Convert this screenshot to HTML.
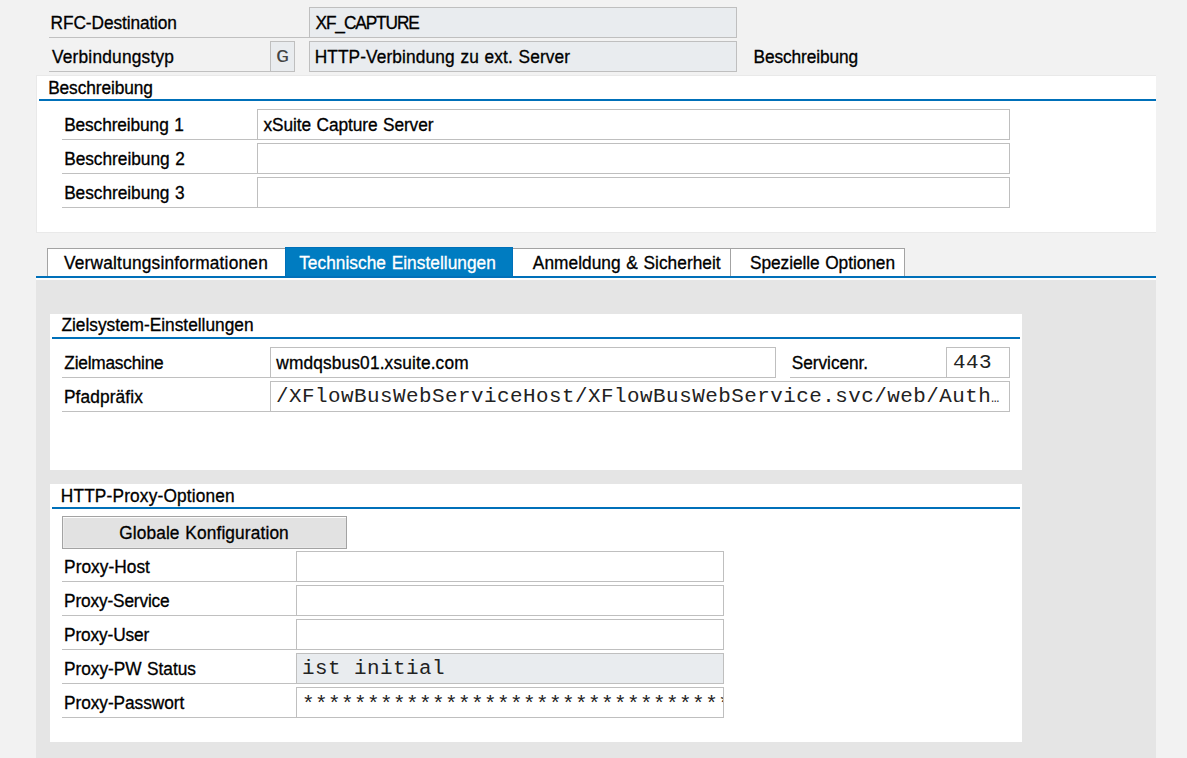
<!DOCTYPE html>
<html lang="de">
<head>
<meta charset="utf-8">
<title>RFC-Destination XF_CAPTURE</title>
<style>
html,body{margin:0;padding:0;}
body{width:1187px;height:758px;overflow:hidden;background:#f2f2f2;position:relative;
  font-family:"Liberation Sans",sans-serif;font-size:17.3px;color:#000;}
.a{position:absolute;}
.t{position:absolute;white-space:nowrap;word-spacing:0.8px;line-height:20px;height:20px;transform:scaleY(1.06);transform-origin:0 16px;-webkit-text-stroke:0.3px currentColor;}
.u{position:absolute;height:1px;background:#c0c0c0;}
.f{position:absolute;box-sizing:border-box;height:31px;border:1px solid #bfbfbf;background:#fff;overflow:hidden;white-space:nowrap;}
.f.d{background:#e9ecef;}
.m{position:absolute;left:5px;top:5px;line-height:20px;font-family:"Liberation Mono",monospace;font-size:19px;letter-spacing:0.42px;color:#222;transform:scale(1.1,1.05);transform-origin:0 16px;}
.m.g{color:#444;}
.el{letter-spacing:0;font-size:12px;}
.bl{position:absolute;height:2px;background:#0070b9;}
.box{position:absolute;background:#fff;}
.btn{box-sizing:border-box;border:1px solid #a3a3a3;background:#e2e2e2;box-shadow:inset 0 1px 0 #fdfdfd,inset 1px 0 0 #ebebeb,inset 0 -1px 0 #e8e8e8;}
#mstar{top:7px;}
#mG{left:5px;transform:scale(1.15,1.0);}
</style>
</head>
<body>
<div class="t" id="t1" style="left:50.62px;top:13.00px;letter-spacing:-0.097px;">RFC-Destination</div>
<div class="u" style="left:49px;top:37px;width:260px;"></div>
<div class="f d" style="left:309px;top:7px;width:428px;"></div>
<div class="t" id="t3" style="left:315.49px;top:13.00px;letter-spacing:-1.100px;">XF_CAPTURE</div>
<div class="t" id="t2" style="left:51.88px;top:47.00px;letter-spacing:0.228px;">Verbindungstyp</div>
<div class="u" style="left:49px;top:71px;width:221px;"></div>
<div class="f d" style="left:270px;top:41px;width:25px;"><span class="m g" id="mG">G</span></div>
<div class="f d" style="left:309px;top:41px;width:428px;"></div>
<div class="t" id="t4" style="left:314.64px;top:47.00px;letter-spacing:0.115px;">HTTP-Verbindung zu ext. Server</div>
<div class="t" id="t5" style="left:753.62px;top:47.00px;letter-spacing:-0.116px;">Beschreibung</div>
<div class="a" style="left:36px;top:75px;width:1120px;height:158px;background:#e9e9e9;"></div>
<div class="box" style="left:37px;top:76px;width:1119px;height:156px;"></div>
<div class="t" id="t6" style="left:48.17px;top:78.00px;letter-spacing:-0.091px;">Beschreibung</div>
<div class="bl" style="left:39px;top:99px;width:1117px;"></div>
<div class="t" id="t7" style="left:64.13px;top:115.00px;letter-spacing:-0.097px;">Beschreibung 1</div>
<div class="u" style="left:62px;top:139px;width:195px;"></div>
<div class="f" style="left:257px;top:109px;width:753px;"></div>
<div class="t" id="t8" style="left:64.13px;top:149.00px;letter-spacing:-0.018px;">Beschreibung 2</div>
<div class="u" style="left:62px;top:173px;width:195px;"></div>
<div class="f" style="left:257px;top:143px;width:753px;"></div>
<div class="t" id="t9" style="left:64.13px;top:183.00px;letter-spacing:-0.030px;">Beschreibung 3</div>
<div class="u" style="left:62px;top:207px;width:195px;"></div>
<div class="f" style="left:257px;top:177px;width:753px;"></div>
<div class="t" id="t10" style="left:263.57px;top:115.00px;letter-spacing:-0.087px;">xSuite Capture Server</div>
<div class="a" style="left:36px;top:278px;width:1120px;height:2px;background:#fdfdfd;"></div>
<div class="a" style="left:36px;top:280px;width:1120px;height:478px;background:#e5e5e5;"></div>
<div class="a" style="left:47px;top:248px;width:858px;height:28px;background:#fff;box-sizing:border-box;border:1px solid #a3a3a3;border-bottom:none;"></div>
<div class="a" style="left:730px;top:248px;width:1px;height:28px;background:#a3a3a3;"></div>
<div class="bl" style="left:36px;top:276px;width:1120px;"></div>
<div class="a" style="left:285px;top:247px;width:228px;height:29px;background:#007cc1;box-sizing:border-box;border:1px solid #0070b9;border-bottom:none;"></div>
<div class="t" id="t11" style="left:63.97px;top:253.00px;letter-spacing:0.214px;">Verwaltungsinformationen</div>
<div class="t" id="t12" style="left:299.17px;top:253.00px;letter-spacing:0.038px;color:#fff;">Technische Einstellungen</div>
<div class="t" id="t13" style="left:532.83px;top:253.00px;letter-spacing:0.040px;">Anmeldung &amp; Sicherheit</div>
<div class="t" id="t14" style="left:750.00px;top:253.00px;letter-spacing:-0.051px;">Spezielle Optionen</div>
<div class="box" style="left:50px;top:314px;width:972px;height:156px;"></div>
<div class="t" id="t15" style="left:61.42px;top:315.00px;letter-spacing:0.001px;">Zielsystem-Einstellungen</div>
<div class="bl" style="left:52px;top:337px;width:968px;"></div>
<div class="t" id="t16" style="left:64.37px;top:353.00px;letter-spacing:-0.224px;">Zielmaschine</div>
<div class="u" style="left:62px;top:377px;width:208px;"></div>
<div class="f" style="left:270px;top:347px;width:506px;"></div>
<div class="t" id="t17" style="left:276.32px;top:353.00px;letter-spacing:0.151px;">wmdqsbus01.xsuite.com</div>
<div class="t" id="t18" style="left:791.87px;top:353.00px;letter-spacing:-0.068px;">Servicenr.</div>
<div class="u" style="left:790px;top:377px;width:156px;"></div>
<div class="f" style="left:946px;top:347px;width:64px;"><span class="m" id="m443" style="left:6px;">443</span></div>
<div class="t" id="t19" style="left:63.95px;top:387.00px;letter-spacing:0.117px;">Pfadpräfix</div>
<div class="u" style="left:62px;top:411px;width:208px;"></div>
<div class="f" style="left:270px;top:381px;width:740px;"><span class="m" id="mpath">/XFlowBusWebServiceHost/XFlowBusWebService.svc/web/Auth<span class="el">…</span></span></div>
<div class="box" style="left:50px;top:484px;width:972px;height:258px;"></div>
<div class="t" id="t20" style="left:60.79px;top:486.00px;letter-spacing:0.166px;">HTTP-Proxy-Optionen</div>
<div class="bl" style="left:52px;top:507px;width:968px;"></div>
<div class="a btn" style="left:62px;top:516px;width:285px;height:33px;"></div>
<div class="t" id="t21" style="left:119.15px;top:523.00px;letter-spacing:0.129px;">Globale Konfiguration</div>
<div class="t" id="t22" style="left:64.11px;top:557.00px;letter-spacing:0.035px;">Proxy-Host</div>
<div class="u" style="left:62px;top:581px;width:234px;"></div>
<div class="f" style="left:296px;top:551px;width:428px;"></div>
<div class="t" id="t23" style="left:64.11px;top:591.00px;letter-spacing:-0.163px;">Proxy-Service</div>
<div class="u" style="left:62px;top:615px;width:234px;"></div>
<div class="f" style="left:296px;top:585px;width:428px;"></div>
<div class="t" id="t24" style="left:64.11px;top:625.00px;letter-spacing:-0.149px;">Proxy-User</div>
<div class="u" style="left:62px;top:649px;width:234px;"></div>
<div class="f" style="left:296px;top:619px;width:428px;"></div>
<div class="t" id="t25" style="left:64.11px;top:659.00px;letter-spacing:-0.043px;">Proxy-PW Status</div>
<div class="u" style="left:62px;top:683px;width:234px;"></div>
<div class="f d" style="left:296px;top:653px;width:428px;"><span class="m" id="mist">ist initial</span></div>
<div class="t" id="t26" style="left:64.11px;top:693.00px;letter-spacing:-0.071px;">Proxy-Passwort</div>
<div class="u" style="left:62px;top:717px;width:234px;"></div>
<div class="f" style="left:296px;top:687px;width:428px;"><span class="m" id="mstar">*********************************</span></div>
</body>
</html>
